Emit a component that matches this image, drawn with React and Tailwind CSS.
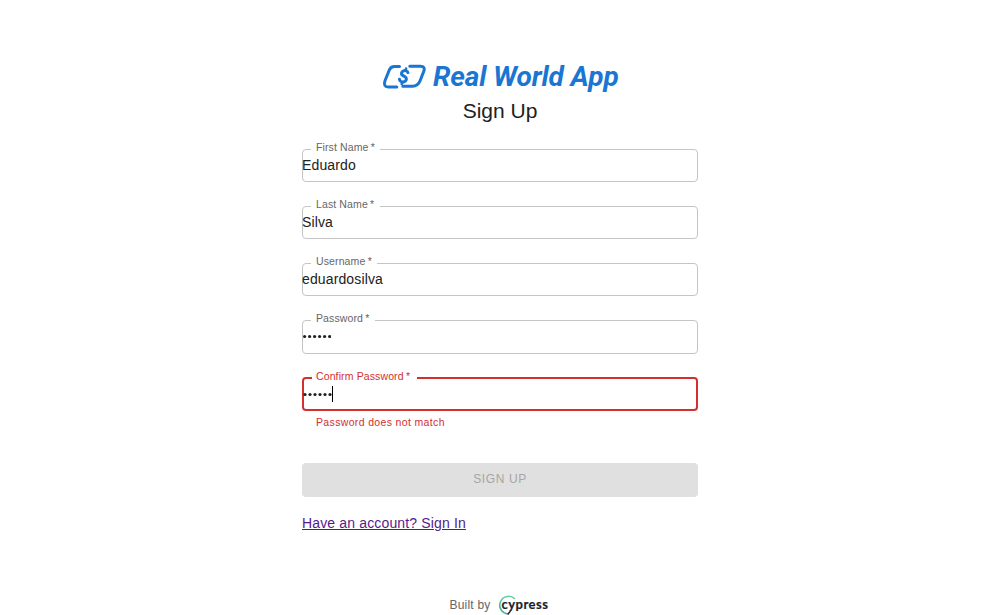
import React from "react";

function MoneyIcon() {
  return (
    <svg
      className="mt-[3px] h-[28px] w-[45px] shrink-0"
      viewBox="0 0 45 28"
      fill="none"
      stroke="#1976d2"
      strokeWidth="3"
      strokeLinecap="round"
      strokeLinejoin="round"
    >
      <path d="M17.500 3.500H12.500C9.700 3.500 8.300 4.600 7.300 7L3 17.800C1.500 21.700 2.900 24 6.200 24H14.800" />
      <path d="M27.800 3.300H38.500C41.900 3.300 43 5.300 41.900 8L38.200 17.500C36.700 21.300 34.200 23.200 30.500 23.200H20.800" />
      <path d="M25.900 9.600C25.400 7.800 23.400 7.200 21.500 7.900C19.400 8.700 18.800 10.800 20.300 12.100L23.400 14C25.200 15.500 24.500 18 22.100 18.700C19.800 19.300 17.700 18.300 17.400 16.300" />
      <path d="M23.500 7.300L24.100 5.600M20.400 19.200L19.700 21" strokeWidth="2.6" />
    </svg>
  );
}

function CypressMark() {
  return (
    <div className="relative ml-[8px] h-[20px] w-[52px] shrink-0">
      <svg className="absolute left-0 top-0 h-[20px] w-[20px]" viewBox="0 0 20 20" fill="none">
        <defs>
          <linearGradient id="ring" x1="16" y1="1" x2="4" y2="19" gradientUnits="userSpaceOnUse">
            <stop offset="0" stopColor="#69d3a7" />
            <stop offset="0.5" stopColor="#5cc9a4" />
            <stop offset="1" stopColor="#3fa899" />
          </linearGradient>
        </defs>
        <path d="M16.800 3.900A8.800 8.800 0 1 0 10 18.900" stroke="url(#ring)" strokeWidth="1.600" />
        <path d="M9.600 19C11.200 18.900 11.800 17.500 12.600 15.300" stroke="#1b1e2e" strokeWidth="1.500" />
      </svg>
      <span className="absolute left-[3px] top-[1px] font-[Lato,sans-serif] text-[13px] font-bold leading-[16px] tracking-[0.5px] text-[#1b1e2e] [-webkit-text-stroke:0.2px_#1b1e2e]">
        cypress
      </span>
    </div>
  );
}

function Field({ label, notch, value, password, error, box, helper }) {
  return (
    <div>
      <div
        className={`relative rounded-[4px] ${box} ${
          error ? "border-2 border-[#d32f2f]" : "border border-[#c4c4c4]"
        }`}
      >
        <div
          className={`absolute left-[8px] -top-[9px] flex h-[13px] items-center bg-white text-[10.500px] leading-[13px] tracking-[0.12px] whitespace-nowrap ${notch} ${
            error ? "pl-[4px] text-[#d32f2f]" : "pl-[5px] text-[#666666]"
          }`}
        >
          {label}&thinsp;*
        </div>
        {password ? (
          <div className={`flex items-center ${error ? "-ml-px h-[30px]" : "-ml-px h-[31px]"}`}>
            <svg className="h-[5px] w-[29px]" viewBox="0 0 29 5" fill="#212121">
              {[2.2, 7.2, 12.2, 17.2, 22.2, 27.2].map((x) => (
                <circle key={x} cx={error ? x - 0.2 : x + 0.4} cy="2.500" r="1.600" />
              ))}
            </svg>
            {error && <span className="h-[16px] w-px bg-black" />}
          </div>
        ) : (
          <div className="-ml-px pt-[5px] text-[14px] leading-[20px] tracking-[0.13px] text-[#212121]">{value}</div>
        )}
      </div>
      {helper && (
        <div className="ml-[14px] mt-[4px] h-[15px] text-[10.500px] leading-[15px] tracking-[0.35px] text-[#d32f2f]">
          {helper}
        </div>
      )}
    </div>
  );
}

export default function App() {
  return (
    <main className="flex h-[615px] flex-col items-center overflow-hidden bg-white font-['Liberation_Sans',Arial,sans-serif]">
      <div className="mt-[60px] flex h-[36px] w-[236px] items-start">
        <MoneyIcon />
        <span className="ml-[6px] font-[Roboto,sans-serif] text-[28px] font-bold italic leading-[34px] tracking-[-0.1px] whitespace-nowrap text-[#1976d2]">
          Real World App
        </span>
      </div>
      <h1 className="h-[30px] text-[21px] leading-[30px] text-[#212121]">Sign Up</h1>

      <form className="mt-[23px] flex w-[396px] flex-col">
        <div className="flex flex-col gap-[24px]">
          <Field label="First Name" notch="w-[69px]" value="Eduardo" box="h-[33px]" />
          <Field label="Last Name" notch="w-[69px]" value="Silva" box="h-[33px]" />
          <Field label="Username" notch="w-[66px]" value="eduardosilva" box="h-[33px]" />
          <Field label="Password" notch="w-[64px]" password box="h-[34px]" />
        </div>
        <div className="mt-[23px]">
          <Field
            label="Confirm Password"
            notch="w-[105px]"
            password
            error
            box="h-[34px]"
            helper="Password does not match"
          />
        </div>
        <button
          type="button"
          disabled
          className="mt-[33px] h-[34px] rounded-[4px] bg-[#e0e0e0] pb-[2px] text-[12px] tracking-[0.6px] text-[#a6a6a6]"
        >
          SIGN UP
        </button>
        <a className="mt-[16px] self-start text-[14px] leading-[20px] tracking-[0.15px] text-[#551a8b] underline">
          Have an account? Sign In
        </a>
      </form>

      <footer className="mt-[62px] flex w-[101px] shrink-0 items-start text-[12px] leading-[20px] tracking-[0.2px] text-[#666666]">
        <span className="whitespace-nowrap">Built by</span>
        <CypressMark />
      </footer>
    </main>
  );
}
